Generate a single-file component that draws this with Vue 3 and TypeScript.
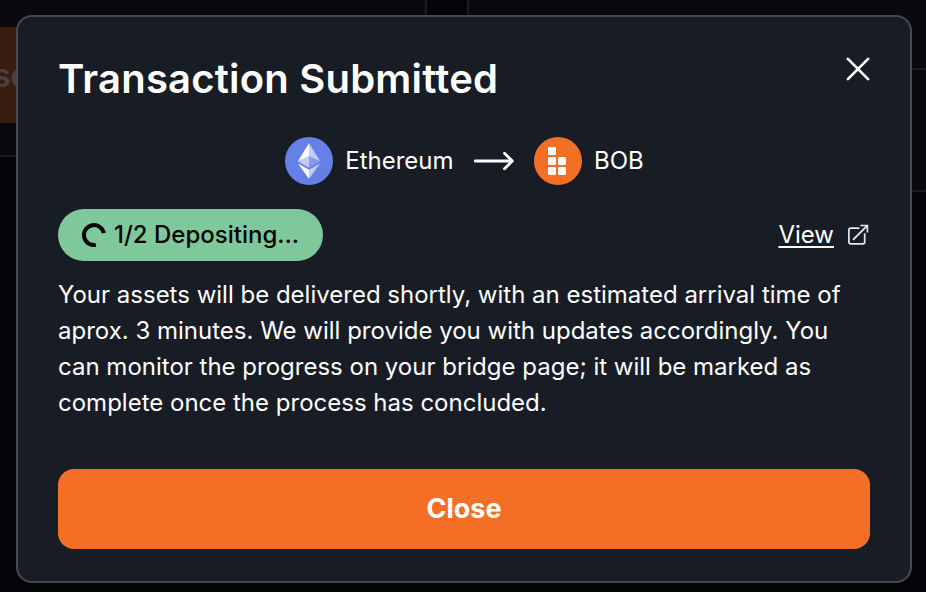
<script setup lang="ts">
interface Network {
  id: string
  name: string
}

const from: Network = { id: 'ethereum', name: 'Ethereum' }
const to: Network = { id: 'bob', name: 'BOB' }

// Cells of the BOB mark, as [x, y] in its 48px badge
const bobCells: [number, number][] = [
  [14, 10],
  [14, 20],
  [24, 20],
  [14, 30],
  [24, 30],
]
</script>

<template>
  <div class="page">
    <div class="backdrop">
      <section class="panel panel-left">
        <div class="panel-button">se</div>
      </section>
      <section class="panel panel-right">
        <div class="panel-head"></div>
      </section>
    </div>

    <main class="modal" role="dialog" aria-labelledby="title">
      <header class="header">
        <h1 id="title" class="title">Transaction Submitted</h1>
        <button class="dismiss" aria-label="Close dialog">
          <svg width="24" height="24" viewBox="0 0 24 24" fill="none" stroke="#fff" stroke-width="2.7">
            <path d="M1.9 1.9 22.1 22.1M22.1 1.9 1.9 22.1" stroke-linecap="round" />
          </svg>
        </button>
      </header>

      <div class="route">
        <div class="network">
          <svg width="48" height="48" viewBox="0 0 32 32">
            <circle cx="16" cy="16" r="16" fill="#6580e6" />
            <g fill="#fff">
              <path fill-opacity=".602" d="M16 4.2v8.7l7.4 3.3z" />
              <path d="M16 4.2 8.6 16.2l7.4-3.3z" />
              <path fill-opacity=".602" d="M16 21.9v6l7.4-10.3z" />
              <path d="M16 27.9v-6l-7.4-4.3z" />
              <path fill-opacity=".2" d="m16 20.5 7.4-4.3-7.4-3.3z" />
              <path fill-opacity=".602" d="m8.6 16.2 7.4 4.3v-7.6z" />
            </g>
          </svg>
          <span class="label">{{ from.name }}</span>
        </div>
        <svg class="arrow" width="40" height="20" viewBox="0 0 40 20" fill="none" stroke="#fff" stroke-width="2.8" stroke-linecap="round">
          <path d="M1.3 10H37.5" />
          <path d="M30.5 2.2 38.3 10l-7.8 7.8" stroke-linejoin="round" />
        </svg>
        <div class="network">
          <svg width="48" height="48" viewBox="0 0 48 48">
            <circle cx="24" cy="24" r="24" fill="#f36f26" />
            <rect v-for="[x, y] in bobCells" :key="`${x}-${y}`" :x="x" :y="y" width="8" height="8" rx="1.4" fill="#fff" />
          </svg>
          <span class="label">{{ to.name }}</span>
        </div>
      </div>

      <div class="status">
        <div class="badge">
          <svg width="24" height="24" viewBox="0 0 24 24" fill="none" stroke="#000" stroke-width="4">
            <path d="M21.8 10.2A10 10 0 1 0 13.8 21.9" />
          </svg>
          <span class="label">1/2 Depositing...</span>
        </div>
        <a class="view">
          <span class="view-label label">View</span>
          <svg width="22" height="22" viewBox="0 0 22 22" fill="none" stroke="#e6e7ea" stroke-width="1.7" stroke-linecap="square">
            <path d="M11.5 4.2H3.8Q1.9 4.2 1.9 6.1V18Q1.9 19.9 3.8 19.9H15.8Q17.7 19.9 17.7 18V10.2" />
            <path d="M6.6 15.2 20 1.8M14.2 1.5H20.4V7.7" />
          </svg>
        </a>
      </div>

      <p class="message">
        Your assets will be delivered shortly, with an estimated arrival time of aprox. 3 minutes. We
        will provide you with updates accordingly. You can monitor the progress on your bridge page; it
        will be marked as complete once the process has concluded.
      </p>

      <button class="close"><span class="label">Close</span></button>
    </main>
  </div>
</template>

<style>
body {
  background: #030407;
}
</style>

<style scoped>
.page {
  display: grid;
  height: 592px;
  overflow: hidden;
  font-family: Inter, sans-serif;
  font-size: 24px;
  color: #fff;
}
.backdrop,
.modal {
  grid-area: 1 / 1;
  box-sizing: border-box;
}
.backdrop {
  display: grid;
  grid-template-columns: 427px 1fr;
  column-gap: 40px;
  align-items: start;
  background: #030407;
}
.panel {
  box-sizing: border-box;
  background: #090a0d;
  border: 0 solid #1c1c1f;
}
.panel-left {
  height: 157px;
  padding-top: 27px;
  border-right-width: 2px;
  border-bottom-width: 2px;
}
.panel-right {
  height: 192px;
  border-left-width: 2px;
  border-bottom-width: 2px;
}
.panel-head {
  height: 68px;
  border-bottom: 2px solid #1c1c1f;
}
.panel-button {
  height: 96px;
  margin-right: 40px;
  background: #3a1d10;
  color: #454342;
  font-size: 32px;
  font-weight: 600;
  line-height: 97px;
  text-indent: -7px;
}
.label {
  padding-bottom: 2px;
}
.modal {
  display: flex;
  flex-direction: column;
  z-index: 1;
  margin: 15px 14px 9px 16px;
  padding: 38px 40px 32px;
  background: #181c25;
  border: 2px solid #474850;
  border-radius: 16px;
}
.header {
  display: flex;
  justify-content: space-between;
  align-items: flex-start;
  height: 82px;
}
.title {
  margin: 0;
  font-size: 40px;
  font-weight: 600;
  line-height: 48px;
  letter-spacing: 0.2px;
}
.dismiss {
  display: flex;
  margin: 2px 0 0;
  padding: 0;
  border: 0;
  background: none;
}
.route {
  display: flex;
  justify-content: center;
  align-items: center;
  height: 48px;
  padding-left: 1px;
}
.network {
  display: flex;
  align-items: center;
  gap: 12px;
}
.arrow {
  margin: 0 20px 0 20.5px;
}
.status {
  display: flex;
  justify-content: space-between;
  align-items: center;
  height: 52px;
  margin-top: 24px;
}
.badge {
  display: flex;
  align-items: center;
  box-sizing: border-box;
  width: 265px;
  height: 52px;
  padding-left: 24px;
  gap: 8px;
  border-radius: 26px;
  background: #7ec89c;
  color: #000;
  font-weight: 500;
  white-space: nowrap;
}
.view {
  display: flex;
  align-items: center;
  gap: 13px;
  padding-right: 1px;
}
.view-label {
  text-decoration: underline;
  text-decoration-thickness: 2px;
  text-underline-offset: 3px;
}
.message {
  margin: 16px 0 0;
  line-height: 36px;
}
.close {
  display: flex;
  justify-content: center;
  align-items: center;
  height: 80px;
  margin-top: auto;
  padding: 0;
  border: 0;
  border-radius: 16px;
  background: #f36f26;
  color: #fff;
  font: 700 27px Inter, sans-serif;
}
</style>
